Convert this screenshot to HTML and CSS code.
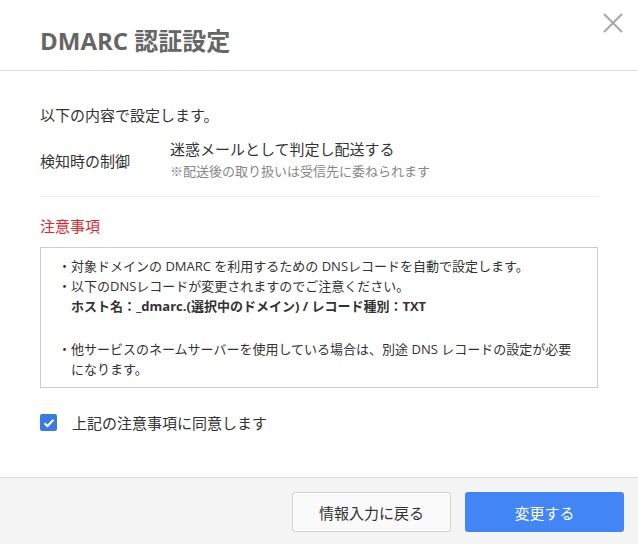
FILE: index.html
```html
<!DOCTYPE html>
<html lang="ja">

<head>
    <meta charset="UTF-8">
    <title>DMARC 認証設定</title>
    <link rel="stylesheet" href="styles.css">
</head>

<body>
    <div class="modal">
        <div class="modal-header">
            <h1>DMARC 認証設定</h1>
            <button class="close-button" aria-label="閉じる">
                <svg width="20" height="20" viewBox="0 0 20 20">
                    <path d="M1 1L19 19M19 1L1 19" stroke="#aaaaaa" stroke-width="2.2" fill="none" />
                </svg>
            </button>
        </div>

        <div class="modal-body">
            <p class="lead">以下の内容で設定します。</p>

            <div class="setting-row">
                <div class="setting-label">検知時の制御</div>
                <div class="setting-value">
                    <div class="value-main">迷惑メールとして判定し配送する</div>
                    <div class="value-note">※配送後の取り扱いは受信先に委ねられます</div>
                </div>
            </div>

            <h2 class="notice-title">注意事項</h2>
            <div class="notice-box">
                <ul>
                    <li>・対象ドメインの DMARC を利用するための DNSレコードを自動で設定します。</li>
                    <li>・以下のDNSレコードが変更されますのでご注意ください。
                        <div class="record">ホスト名：_dmarc.(選択中のドメイン) / レコード種別：TXT</div>
                    </li>
                    <li class="spaced">・他サービスのネームサーバーを使用している場合は、別途 DNS レコードの設定が必要になります。</li>
                </ul>
            </div>

            <label class="agree">
                <span class="checkbox">
                    <svg width="12" height="10" viewBox="0 0 12 10">
                        <path d="M1.5 5.2L4.5 8L10.5 1.8" stroke="#ffffff" stroke-width="2" fill="none" />
                    </svg>
                </span>
                上記の注意事項に同意します
            </label>
        </div>

        <div class="modal-footer">
            <button class="btn btn-back">情報入力に戻る</button>
            <button class="btn btn-submit">変更する</button>
        </div>
    </div>
</body>

</html>
```

FILE: styles.css
```css
body {
    margin: 0;
    font-family: "Open Sans", "Noto Sans CJK JP", sans-serif;
    color: #333333;
    background-color: #ffffff;
}

.modal {
    width: 638px;
    height: 544px;
    display: flex;
    flex-direction: column;
}

.modal-header {
    display: flex;
    justify-content: space-between;
    align-items: flex-start;
    height: 70px;
    border-bottom: 1px solid #dddddd;
    padding: 0 15px 0 40px;
}

.modal-header h1 {
    margin: 0;
    padding-top: 25px;
    font-size: 24px;
    line-height: 32px;
    font-weight: bold;
    color: #666666;
}

.close-button {
    background: none;
    border: none;
    padding: 0;
    margin-top: 13px;
    width: 20px;
    height: 20px;
    cursor: pointer;
}

.modal-body {
    flex: 1;
    padding: 33px 40px 0 40px;
}

.lead {
    margin: 0;
    font-size: 15px;
    line-height: 22px;
}

.setting-row {
    display: flex;
    align-items: center;
    margin-top: 12px;
    padding-bottom: 13px;
    border-bottom: 1px solid #eeeeee;
}

.setting-label {
    width: 130px;
    font-size: 15px;
}

.value-main {
    font-size: 15px;
    line-height: 22px;
}

.value-note {
    font-size: 13px;
    line-height: 23px;
    color: #888888;
}

.notice-title {
    margin: 18px 0 0 0;
    font-size: 15px;
    line-height: 22px;
    font-weight: normal;
    color: #e5262b;
}

.notice-box {
    margin-top: 10px;
    border: 1px solid #cccccc;
    padding: 8px 14px 8px 17px;
}

.notice-box ul {
    list-style: none;
    margin: 0;
    padding: 0;
}

.notice-box li {
    font-size: 13px;
    line-height: 20px;
    padding-left: 13px;
    text-indent: -13px;
}

.notice-box li.spaced {
    margin-top: 23px;
}

.record {
    text-indent: 0;
    font-weight: bold;
}

.agree {
    display: flex;
    align-items: center;
    gap: 15px;
    margin-top: 24px;
    font-size: 15px;
    cursor: pointer;
}

.checkbox {
    display: flex;
    align-items: center;
    justify-content: center;
    width: 17px;
    height: 17px;
    border-radius: 2px;
    background-color: #3b7be0;
}

.modal-footer {
    display: flex;
    justify-content: flex-end;
    gap: 14px;
    height: 67px;
    padding: 14px 14px 0 0;
    box-sizing: border-box;
    background-color: #f4f4f4;
    border-top: 1px solid #dddddd;
}

.btn {
    width: 159px;
    height: 40px;
    border-radius: 3px;
    font-family: "Open Sans", "Noto Sans CJK JP", sans-serif;
    font-size: 15px;
    cursor: pointer;
}

.btn-back {
    background-color: #fafafa;
    border: 1px solid #d4d4d4;
    color: #333333;
}

.btn-submit {
    background-color: #4285f4;
    border: none;
    color: #ffffff;
}
```
